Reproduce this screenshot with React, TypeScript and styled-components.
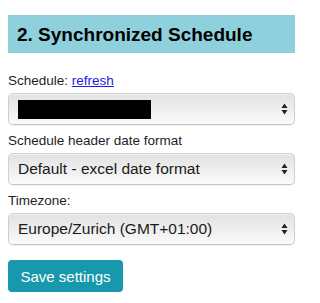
import React, { ReactElement, ReactNode } from 'react';
import styled, { createGlobalStyle } from 'styled-components';

const GlobalStyle = createGlobalStyle`
  html, body {
    margin: 0;
    padding: 0;
    background: #ffffff;
  }
  body {
    font-family: "Liberation Sans", Arial, sans-serif;
    color: #222222;
  }
`;

const Page = styled.div`
  width: 287px;
  padding: 15px 7px 10px 8px;
  display: flex;
  flex-direction: column;
`;

const SectionTitle = styled.h2`
  margin: 0;
  height: 38px;
  padding: 1px 0 0 9px;
  box-sizing: border-box;
  background-color: #8ed0dc;
  font-size: 19px;
  font-weight: bold;
  line-height: 37px;
  color: #000000;
`;

const Form = styled.div`
  margin-top: 19px;
  display: flex;
  flex-direction: column;
  gap: 7px;
`;

const Field = styled.div`
  display: flex;
  flex-direction: column;
`;

const Label = styled.div`
  font-size: 13.5px;
  line-height: 17px;
  margin-bottom: 4px;
  color: #1e1e1e;
`;

const Link = styled.a`
  color: #1a1ae6;
  text-decoration: underline;
`;

const SelectBox = styled.div`
  height: 32px;
  box-sizing: border-box;
  display: flex;
  align-items: center;
  padding: 0 8px 0 9px;
  border: 1px solid #cfcfcf;
  border-bottom-color: #c4c4c4;
  border-radius: 5px;
  background: linear-gradient(#e2e2e2, #efefef 55%, #fbfbfb);
  box-shadow: inset 0 1px 0 rgba(255, 255, 255, 0.6), 0 1px 1px rgba(0, 0, 0, 0.06);
  font-size: 15.5px;
  color: #1a1a1a;
`;

const SelectValue = styled.div`
  flex: 1;
  white-space: nowrap;
  overflow: hidden;
`;

const Redacted = styled.div`
  width: 136px;
  height: 19px;
  margin-left: -3px;
  background: #000000;
`;

const Arrows = styled.svg`
  flex: none;
  width: 7px;
  height: 12px;
  margin-right: -2px;
`;

const SaveButton = styled.button`
  margin-top: 8px;
  align-self: flex-start;
  width: 115px;
  height: 32px;
  border: none;
  border-radius: 4px;
  background-color: #1898ad;
  color: #ffffff;
  font-family: "Liberation Sans", Arial, sans-serif;
  font-size: 15px;
  padding: 0;
`;

const SelectControl = ({ children }: { children: ReactNode }): ReactElement => (
  <SelectBox>
    <SelectValue>{children}</SelectValue>
    <Arrows viewBox="0 0 7 12">
      <path d="M3.5 0.5 L6.5 5 L0.5 5 Z" fill="#222" />
      <path d="M3.5 11.5 L6.5 7 L0.5 7 Z" fill="#222" />
    </Arrows>
  </SelectBox>
);

function App(): ReactElement {
  return (
    <>
      <GlobalStyle />
      <Page>
        <SectionTitle>2. Synchronized Schedule</SectionTitle>
        <Form>
          <Field>
            <Label>
              Schedule: <Link href="#">refresh</Link>
            </Label>
            <SelectControl>
              <Redacted />
            </SelectControl>
          </Field>
          <Field>
            <Label>Schedule header date format</Label>
            <SelectControl>Default - excel date format</SelectControl>
          </Field>
          <Field>
            <Label>Timezone:</Label>
            <SelectControl>Europe/Zurich (GMT+01:00)</SelectControl>
          </Field>
          <SaveButton>Save settings</SaveButton>
        </Form>
      </Page>
    </>
  );
}

export default App;
